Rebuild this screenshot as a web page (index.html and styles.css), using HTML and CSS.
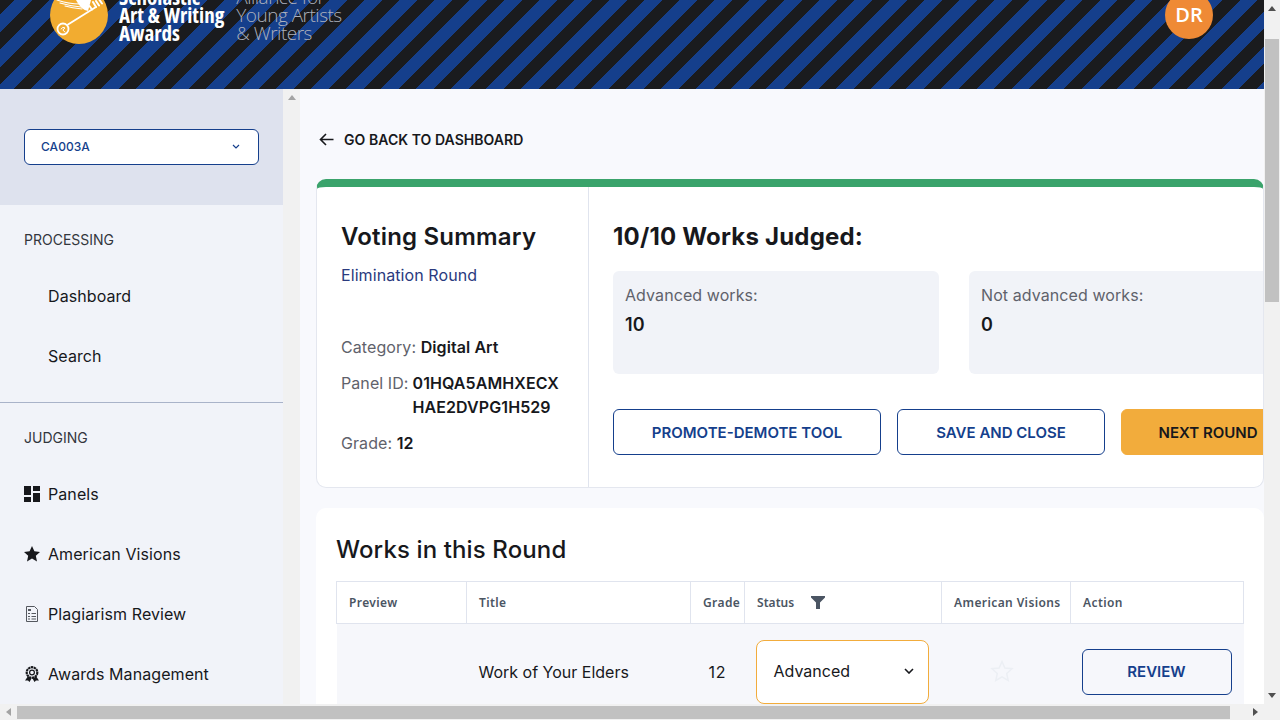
FILE: index.html
```html
<!DOCTYPE html>
<html lang="en">
<head>
  <meta charset="UTF-8" />
  <title>Voting Summary</title>
  <link rel="stylesheet" href="styles.css">
</head>
<body>
  <div class="window">
    <div class="page">
      <header class="topbar">
        <div class="brand">
          <svg class="brand-mark" width="58" height="58" viewBox="0 0 58 58">
            <circle cx="29" cy="29" r="29" fill="#f2ac30"/>
            <g fill="none" stroke="#fff" stroke-linecap="round">
              <circle cx="13" cy="43" r="5.5" stroke-width="1.8"/>
              <path d="M18 38.5 L46 21" stroke-width="1.8"/>
              <path d="M42 23.5 L39.5 20 M46 21 L43 16 M49 19.5 L46 15 M52 17.5 L49.5 14" stroke-width="2"/>
              <path d="M11 43 Q13 40 15 42 Q11 44 15 46" stroke-width="1"/>
              <path d="M7 14 Q18 18 30 18 M10 17 Q20 20 31 21 M15 20 Q22 22 32 23" stroke-width="1.1"/>
            </g>
            <path d="M26 14 H41 L38 25 Q31 24 26 14Z" fill="#fff"/>
          </svg>
          <div class="brand-name">Scholastic<br>Art &amp; Writing<br>Awards</div>
          <div class="brand-tag">Alliance for<br>Young Artists<br>&amp; Writers</div>
        </div>
        <div class="avatar">DR</div>
      </header>

      <div class="columns">
        <aside class="sidebar">
          <div class="sidebar-inner">
            <div class="region-panel">
              <div class="region-select">
                <span>CA003A</span>
                <svg width="8" height="5" viewBox="0 0 8 5"><path d="M1 1 L4 4 L7 1" fill="none" stroke="#153f8c" stroke-width="1.2"/></svg>
              </div>
            </div>
            <nav class="nav-section">
              <div class="nav-label">PROCESSING</div>
              <a class="nav-item nav-plain">Dashboard</a>
              <a class="nav-item nav-plain">Search</a>
            </nav>
            <nav class="nav-section nav-ruled">
              <div class="nav-label">JUDGING</div>
              <a class="nav-item">
                <svg class="nav-icon" width="16" height="16" viewBox="0 0 16 16" fill="#17181c"><path d="M0 0H7V9H0Z M9 0H16V5H9Z M9 7H16V16H9Z M0 11H7V16H0Z"/></svg>
                Panels
              </a>
              <a class="nav-item">
                <svg class="nav-icon" width="16" height="16" viewBox="0 0 16 16" fill="#17181c"><path d="M8 0 L10.4 5.3 L16 5.9 L11.8 9.7 L13 15.4 L8 12.5 L3 15.4 L4.2 9.7 L0 5.9 L5.6 5.3Z"/></svg>
                American Visions
              </a>
              <a class="nav-item">
                <svg class="nav-icon" width="16" height="16" viewBox="0 0 16 16"><path d="M2.5 .5 H10.5 L13.5 3.5 V15.5 H2.5Z" fill="none" stroke="#55585f"/><path d="M4 3 H7 V5 H4Z M4 7 H6 V8 H4Z M7.5 7 H12 V8 H7.5Z M4 10 H6 V11 H4Z M7.5 10 H12 V11 H7.5Z M4 12.5 H6 V13.5 H4Z M7.5 12.5 H12 V13.5 H7.5Z" fill="#55585f"/></svg>
                Plagiarism Review
              </a>
              <a class="nav-item">
                <svg class="nav-icon" width="16" height="16" viewBox="0 0 16 16"><path d="M3.8 10.5 L1 14.5 L4 14.5 L5.5 16 L7.5 12.5 M12.2 10.5 L15 14.5 L12 14.5 L10.5 16 L8.5 12.5" fill="#17181c"/><circle cx="8" cy="6.5" r="5.3" fill="none" stroke="#17181c" stroke-width="2.2" stroke-dasharray="2.4 .5"/><circle cx="8" cy="6.5" r="2.4" fill="none" stroke="#17181c" stroke-width="1.2"/></svg>
                Awards Management
              </a>
            </nav>
          </div>
          <div class="sidebar-scroll"><span class="arrow arrow-up arrow-muted"></span></div>
        </aside>

        <main class="content">
          <a class="back-link">
            <svg class="back-icon" width="15" height="13" viewBox="0 0 15 13"><path d="M14.5 6.5 H1.5 M7 1 L1.5 6.5 L7 12" fill="none" stroke="#17181c" stroke-width="1.6"/></svg>
            GO BACK TO DASHBOARD
          </a>

          <section class="summary-card">
            <div class="summary-info">
              <h2>Voting Summary</h2>
              <p class="round-name">Elimination Round</p>
              <p class="meta meta-first">Category: <b>Digital Art</b></p>
              <div class="meta meta-panel">
                <span>Panel ID:</span>
                <b>01HQA5AMHXECX<br>HAE2DVPG1H529</b>
              </div>
              <p class="meta">Grade: <b>12</b></p>
            </div>
            <div class="summary-main">
              <h2>10/10 Works Judged:</h2>
              <div class="stats">
                <div class="stat">
                  <div class="stat-label">Advanced works:</div>
                  <div class="stat-value">10</div>
                </div>
                <div class="stat">
                  <div class="stat-label">Not advanced works:</div>
                  <div class="stat-value">0</div>
                </div>
              </div>
              <div class="actions">
                <button class="btn btn-wide">PROMOTE-DEMOTE TOOL</button>
                <button class="btn btn-mid">SAVE AND CLOSE</button>
                <button class="btn btn-next">NEXT ROUND</button>
              </div>
            </div>
          </section>

          <section class="works-card">
            <h2>Works in this Round</h2>
            <table class="works-table">
              <thead>
                <tr>
                  <th class="col-preview">Preview</th>
                  <th class="col-title">Title</th>
                  <th class="col-grade">Grade</th>
                  <th class="col-status">
                    <span class="status-head">Status
                      <svg width="14" height="13" viewBox="0 0 14 13"><path d="M0 0 H14 V1.5 L9 6.5 V13 H5 V6.5 L0 1.5Z" fill="#4b5563"/></svg>
                    </span>
                  </th>
                  <th class="col-visions">American Visions</th>
                  <th class="col-action">Action</th>
                </tr>
              </thead>
              <tbody>
                <tr>
                  <td></td>
                  <td class="cell-title">Work of Your Elders</td>
                  <td class="cell-grade">12</td>
                  <td>
                    <div class="status-select">
                      Advanced
                      <svg width="10" height="6" viewBox="0 0 10 6"><path d="M1 1 L5 5 L9 1" fill="none" stroke="#17181c" stroke-width="1.6"/></svg>
                    </div>
                  </td>
                  <td class="cell-star">
                    <svg width="24" height="24" viewBox="0 0 24 24"><path d="M12 2.5 L14.9 9 L22 9.7 L16.7 14.5 L18.2 21.5 L12 17.9 L5.8 21.5 L7.3 14.5 L2 9.7 L9.1 9Z" fill="none" stroke="#eceff4" stroke-width="1.5"/></svg>
                  </td>
                  <td><button class="btn btn-review">REVIEW</button></td>
                </tr>
              </tbody>
            </table>
          </section>
        </main>
      </div>
    </div>

    <div class="scroll-v">
      <span class="arrow arrow-up"></span>
      <div class="thumb-v"></div>
      <span class="arrow arrow-down"></span>
    </div>
    <div class="scroll-h">
      <span class="arrow arrow-left"></span>
      <div class="thumb-h"></div>
      <span class="arrow arrow-right"></span>
    </div>
    <div class="scroll-corner"></div>
  </div>
</body>
</html>
```

FILE: styles.css
```css
* {
  box-sizing: border-box;
  letter-spacing: 0.005em;
}
body {
  margin: 0;
  font-family: Inter, "Liberation Sans", sans-serif;
  color: #17181c;
  background: #f8f9fd;
  overflow: hidden;
}
h2, p {
  margin: 0;
}
.window {
  display: grid;
  grid-template-columns: 1264px 16px;
  grid-template-rows: 704px 16px;
  width: 1280px;
  height: 720px;
}
.page {
  overflow: hidden;
  min-width: 0;
}

/* header */
.topbar {
  height: 89px;
  display: flex;
  justify-content: space-between;
  align-items: flex-end;
  padding: 0 51px 45px 50px;
  overflow: hidden;
  background: repeating-linear-gradient(135deg, #1a1b1e 0, #1a1b1e 10.57px, #153f8c 10.57px, #153f8c 22.95px, #1a1b1e 22.95px, #1a1b1e 24.75px);
}
.brand {
  display: flex;
  align-items: flex-end;
}
.brand-mark {
  flex: none;
}
.brand-name {
  margin-left: 11px;
  margin-bottom: 2px;
  font-family: "Open Sans", sans-serif;
  font-weight: 700;
  font-stretch: 85%;
  font-size: 21px;
  line-height: 18px;
  letter-spacing: 0;
  color: #fff;
  white-space: nowrap;
}
.brand-tag {
  margin-left: 12px;
  margin-bottom: 2px;
  font-family: "Open Sans", sans-serif;
  font-weight: 300;
  font-size: 19px;
  line-height: 18px;
  letter-spacing: -0.5px;
  color: #adb1bc;
  white-space: nowrap;
}
.avatar {
  width: 48px;
  height: 48px;
  margin-bottom: 5px;
  border-radius: 50%;
  background: #ef8a35;
  color: #fff;
  font-family: "Open Sans", sans-serif;
  font-weight: 600;
  font-size: 20px;
  line-height: 48px;
  text-align: center;
}

.columns {
  display: flex;
  height: 615px;
}

/* sidebar */
.sidebar {
  flex: none;
  width: 300px;
  display: flex;
  background: #f1f3f9;
}
.sidebar-inner {
  flex: none;
  width: 283px;
}
.sidebar-scroll {
  width: 17px;
  background: #f1f1f1;
  display: flex;
  justify-content: center;
  padding-top: 6px;
}
.region-panel {
  height: 116px;
  padding: 40px 24px;
  background: #dee2ee;
}
.region-select {
  height: 36px;
  display: flex;
  justify-content: space-between;
  align-items: center;
  padding: 0 18px 2px 16px;
  background: #fff;
  border: 1px solid #153f8c;
  border-radius: 6px;
  color: #153f8c;
  font-size: 12px;
  font-weight: 500;
  letter-spacing: 0.3px;
}
.nav-section {
  padding: 24px 0 16px;
}
.nav-ruled {
  border-top: 1px solid #a9b3c9;
}
.nav-label {
  height: 22px;
  margin-bottom: 15px;
  padding-left: 24px;
  font-size: 14px;
  line-height: 22px;
  color: #33363d;
  letter-spacing: 0;
}
.nav-item {
  display: flex;
  align-items: center;
  gap: 8px;
  height: 60px;
  padding-left: 24px;
  font-size: 16px;
}
.nav-plain {
  padding-left: 48px;
}
.nav-icon {
  flex: none;
}

/* main column */
.content {
  flex: none;
  width: 964px;
  padding: 40px 0 0 16px;
}
.back-link {
  display: flex;
  align-items: center;
  gap: 10px;
  height: 22px;
  margin-left: 3px;
  font-size: 14px;
  font-weight: 600;
  line-height: 22px;
  letter-spacing: 0.05px;
}
.back-icon {
  margin-bottom: 2px;
}
.summary-card {
  display: flex;
  height: 309px;
  margin: 28px 0 20px;
  background: #fff;
  border: 1px solid #e4e7ef;
  border-top: 8px solid #3aa36b;
  border-radius: 10px;
  overflow: hidden;
}
.summary-info {
  flex: none;
  width: 272px;
  padding: 34px 0 0 24px;
  border-right: 1px solid #e0e4ee;
}
.summary-info h2,
.summary-main h2 {
  font-size: 24px;
  font-weight: 600;
  line-height: 32px;
  letter-spacing: 0.008em;
}
.summary-main h2 {
  font-weight: 700;
}
.round-name {
  margin-top: 10px;
  font-size: 16px;
  line-height: 24px;
  color: #2a3a7e;
}
.meta {
  font-size: 16px;
  line-height: 24px;
  color: #5f626b;
}
.meta b {
  font-weight: 600;
  color: #17181c;
}
.meta-first {
  margin-top: 48px;
}
.meta-panel {
  display: flex;
  gap: 4px;
  margin: 12px 0;
}
.summary-main {
  flex: none;
  width: 720px;
  padding: 34px 0 0 24px;
}
.stats {
  display: flex;
  gap: 30px;
  margin-top: 18px;
}
.stat {
  flex: none;
  width: 326px;
  height: 103px;
  padding: 12px 12px;
  background: #f1f3f8;
  border-radius: 6px;
}
.stat-label {
  font-size: 16px;
  line-height: 24px;
  color: #5f626b;
}
.stat-value {
  margin-top: 6px;
  font-size: 18px;
  font-weight: 600;
  line-height: 24px;
}
.actions {
  display: flex;
  gap: 16px;
  margin-top: 35px;
}
.btn {
  height: 46px;
  background: #fff;
  border: 1px solid #153f8c;
  border-radius: 6px;
  color: #153f8c;
  font-family: Inter, sans-serif;
  font-size: 15px;
  font-weight: 600;
  letter-spacing: 0;
  padding: 0;
}
.btn-wide {
  width: 268px;
}
.btn-mid {
  width: 208px;
}
.btn-next {
  flex: none;
  width: 174px;
  background: #f2ac3c;
  border-color: #f2ac3c;
  color: #17181c;
}

/* works table */
.works-card {
  height: 300px;
  padding: 26px 20px 0;
  background: #fff;
  border-radius: 10px;
}
.works-card h2 {
  font-size: 24px;
  font-weight: 500;
  line-height: 32px;
}
.works-table {
  width: 907px;
  margin-top: 15px;
  table-layout: fixed;
  border-collapse: collapse;
}
.works-table th {
  height: 42px;
  padding: 0 12px;
  text-align: left;
  border: 1px solid #e0e4ee;
  font-family: "Noto Sans", sans-serif;
  font-size: 12px;
  font-weight: 600;
  letter-spacing: 0.4px;
  color: #4b5563;
  white-space: nowrap;
}
.col-preview { width: 130px; }
.col-title { width: 224px; }
.col-grade { width: 54px; }
.col-status { width: 197px; }
.col-visions { width: 129px; }
.col-action { width: 173px; }
.works-table th.col-grade {
  padding: 0 4px 0 12px;
}
.status-head {
  display: flex;
  align-items: center;
  gap: 17px;
}
.works-table td {
  height: 96px;
  padding: 16px 13px 16px 11px;
  background: #f6f7fb;
  vertical-align: top;
  letter-spacing: 0;
}
.works-table .cell-title,
.works-table .cell-grade {
  padding: 38px 12px 0;
  font-size: 16px;
  line-height: 20px;
}
.works-table .cell-grade {
  letter-spacing: 0.8px;
}
.cell-grade {
  text-align: center;
}
.cell-star {
  text-align: center;
}
.works-table .cell-star {
  padding: 35px 21px 0 12px;
}
.status-select {
  display: flex;
  justify-content: space-between;
  align-items: center;
  height: 64px;
  padding: 0 14px 3px 17px;
  background: #fff;
  border: 1px solid #f2ac3c;
  border-radius: 8px;
  font-size: 16px;
  letter-spacing: 0;
}
.btn-review {
  width: 150px;
  margin-top: 9px;
  padding-bottom: 2px;
  background: transparent;
}

/* scrollbars */
.scroll-v,
.scroll-h,
.scroll-corner {
  background: #f1f1f1;
}
.scroll-v {
  display: flex;
  flex-direction: column;
  align-items: center;
  padding: 6px 0;
}
.thumb-v {
  width: 14px;
  height: 263px;
  margin-top: 28px;
  margin-bottom: auto;
  background: #c1c1c1;
}
.scroll-h {
  display: flex;
  align-items: center;
  padding: 0 6px;
}
.thumb-h {
  width: 1213px;
  height: 13px;
  margin-left: 6px;
  margin-right: auto;
  background: #c1c1c1;
}
.arrow {
  flex: none;
  width: 0;
  height: 0;
  border-style: solid;
  border-color: transparent;
}
.arrow-up {
  border-width: 0 4px 5px;
  border-bottom-color: #505050;
}
.arrow-muted {
  border-bottom-color: #a3a3a3;
}
.arrow-down {
  border-width: 5px 4px 0;
  border-top-color: #505050;
}
.arrow-left {
  border-width: 4px 5px 4px 0;
  border-right-color: #a3a3a3;
}
.arrow-right {
  border-width: 4px 0 4px 5px;
  border-left-color: #505050;
}
```
